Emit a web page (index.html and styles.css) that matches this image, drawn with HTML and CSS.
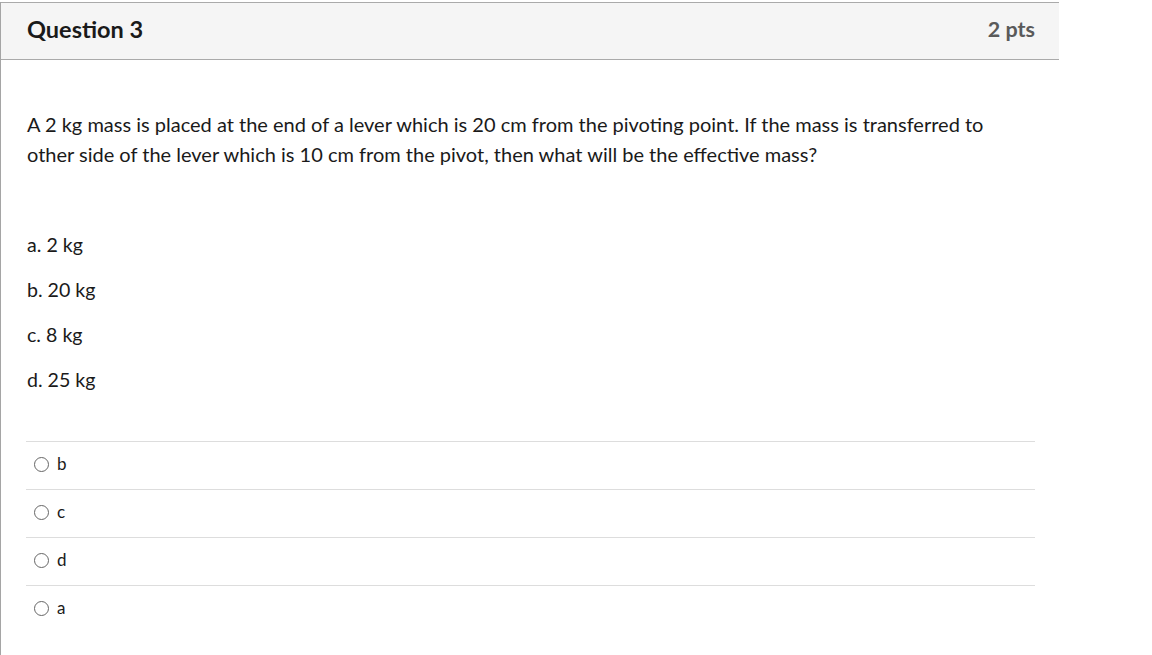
FILE: index.html
```html
<!DOCTYPE html>
<html>
<head>
<meta charset="utf-8">
<link rel="stylesheet" href="styles.css">
</head>
<body>
<div class="card">
  <div class="header">
    <h2 class="title">Question 3</h2>
    <span class="pts">2 pts</span>
  </div>
  <div class="content">
    <p class="question">A 2 kg mass is placed at the end of a lever which is 20 cm from the pivoting point. If the mass is transferred to other side of the lever which is 10 cm from the pivot, then what will be the effective mass?</p>
    <div class="choices">
      <p>a. 2 kg</p>
      <p>b. 20 kg</p>
      <p>c. 8 kg</p>
      <p>d. 25 kg</p>
    </div>
    <div class="answers">
      <label class="answer"><span class="radio"></span><span class="lbl">b</span></label>
      <label class="answer"><span class="radio"></span><span class="lbl">c</span></label>
      <label class="answer"><span class="radio"></span><span class="lbl">d</span></label>
      <label class="answer"><span class="radio"></span><span class="lbl">a</span></label>
    </div>
  </div>
</div>
</body>
</html>
```
FILE: styles.css
```css
html, body {
  margin: 0;
  padding: 0;
  background: #fff;
}
body {
  font-family: Lato, "Open Sans", sans-serif;
  color: #2d3b45;
}
.card {
  margin-top: 2px;
  width: 1058px;
  border-left: 1px solid #a5a5a5;
  min-height: 653px;
}
.header {
  display: flex;
  align-items: center;
  justify-content: space-between;
  background: #f5f5f5;
  border-top: 1px solid #aaa;
  border-bottom: 1px solid #aaa;
  padding: 0 24px 4px 26px;
  box-sizing: border-box;
  height: 58px;
}
.title {
  margin: 0;
  font-size: 23.5px;
  font-weight: 700;
  color: #1a1a1a;
}
.pts {
  font-size: 21.5px;
  font-weight: 700;
  color: #5a5a5a;
}
.content {
  padding: 0 24px 0 25px;
}
.question {
  margin: 49px 0 0 1px;
  max-width: 990px;
  font-size: 20px;
  line-height: 30px;
  color: #1a1a1a;
}
.choices {
  margin-top: 61px;
}
.choices p {
  margin: 0 0 15px 1px;
  font-size: 19.6px;
  line-height: 30px;
  color: #1a1a1a;
}
.answers {
  margin-top: 46px;
}
.answer {
  display: flex;
  align-items: center;
  height: 43px;
  padding-bottom: 4px;
  border-top: 1px solid #ddd;
}
.radio {
  width: 13px;
  height: 13px;
  border: 1px solid #666;
  border-radius: 50%;
  margin-left: 8px;
  margin-right: 8px;
  margin-top: 2px;
  background: #fff;
}
.lbl {
  font-size: 17px;
  color: #1a1a1a;
}
```
